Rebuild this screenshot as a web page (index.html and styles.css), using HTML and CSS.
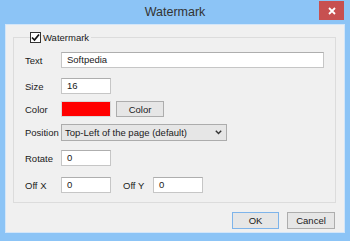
FILE: index.html
```html
<!DOCTYPE html>
<html>
<head>
<meta charset="utf-8">
<link rel="stylesheet" href="styles.css">
</head>
<body>
<div class="window">
  <div class="titlebar">
    <div class="title">Watermark</div>
    <div class="close">
      <svg width="8" height="8" viewBox="0 0 8 8"><path d="M1 1L7 7M7 1L1 7" stroke="#fff" stroke-width="1.8" fill="none"/></svg>
    </div>
  </div>
  <div class="client">
    <fieldset class="group">
      <legend class="legend">
        <span class="check"><svg width="9" height="9" viewBox="0 0 9 9"><path d="M1 4.5L3.5 7L8 1.5" stroke="#111" stroke-width="1.7" fill="none"/></svg></span>
        <span>Watermark</span>
      </legend>
      <div class="row r-text"><span class="label">Text</span><div class="input wide">Softpedia</div></div>
      <div class="row r-size"><span class="label">Size</span><div class="input small">16</div></div>
      <div class="row r-color"><span class="label">Color</span><div class="swatch"></div><div class="btn colorbtn">Color</div></div>
      <div class="row r-pos"><span class="label">Position</span><div class="select"><span>Top-Left of the page (default)</span><svg width="7" height="5" viewBox="0 0 7 5"><path d="M0.8 0.8L3.5 3.6L6.2 0.8" stroke="#333" stroke-width="1.4" fill="none"/></svg></div></div>
      <div class="row r-rot"><span class="label">Rotate</span><div class="input small">0</div></div>
      <div class="row r-off"><span class="label">Off X</span><div class="input small">0</div><span class="label2">Off Y</span><div class="input small">0</div></div>
    </fieldset>
    <div class="actions">
      <div class="btn ok">OK</div>
      <div class="btn cancel">Cancel</div>
    </div>
  </div>
</div>
</body>
</html>
```
FILE: styles.css
```css
* { box-sizing: border-box; }
html, body { margin: 0; padding: 0; }
body {
  width: 350px; height: 241px; overflow: hidden;
  background: #8cc4f6;
  font-family: "Liberation Sans", Arial, sans-serif;
  font-size: 9.5px;
  color: #1a1a1a;
}
.window { width: 350px; height: 241px; display: flex; flex-direction: column; }
.titlebar {
  height: 24px;
  display: grid;
  grid-template-columns: 1fr auto 1fr;
  align-items: start;
}
.title {
  grid-column: 2;
  font-size: 12.5px;
  line-height: 25px;
  color: #333;
}
.close {
  grid-column: 3;
  justify-self: end;
  margin: 1px 6px 0 0;
  width: 25px; height: 19px;
  background: #c75050;
  display: flex; align-items: center; justify-content: center;
}
.client {
  margin: 0 5px;
  height: 209px;
  background: #f0f0f0;
  border: 1px solid #d3e6f9;
  padding: 7px 8px 0 7px;
}
.group {
  margin: 0;
  height: 171px;
  border: 1px solid #dcdcdc;
  padding: 9px 0 0 11px;
}
.legend {
  margin-left: 5px;
  padding: 0 2px 0 0;
  display: flex; align-items: center; gap: 2px;
  height: 11px;
  line-height: 11px;
}
.check {
  width: 11px; height: 11px;
  border: 1px solid #333;
  background: #fff;
  display: flex; align-items: center; justify-content: center;
}
.row { display: flex; align-items: center; height: 16px; }
.r-size { margin-top: 10px; }
.r-color { margin-top: 7px; }
.r-pos { margin-top: 7px; height: 17px; }
.r-rot { margin-top: 9px; }
.r-off { margin-top: 11px; }
.label { width: 36px; }
.label2 { width: 30px; margin-left: 12px; }
.input {
  height: 16px;
  background: #fff;
  border: 1px solid #c6c6c6;
  border-top-color: #aeaeae;
  padding-left: 5px;
  line-height: 14px;
}
.wide { width: 263px; }
.small { width: 50px; }
.swatch { width: 50px; height: 16px; background: #ff0000; border: 1px solid #d8d8d8; }
.btn {
  height: 16px;
  background: #e6e6e6;
  border: 1px solid #adadad;
  display: flex; align-items: center; justify-content: center;
}
.colorbtn { width: 48px; margin-left: 5px; }
.select {
  width: 166px; height: 17px;
  background: #e6e6e6;
  border: 1px solid #acacac;
  display: flex; align-items: center; justify-content: space-between;
  padding: 0 4px 0 3px;
}
.actions {
  display: flex; justify-content: flex-end; gap: 8px;
  margin-top: 9px;
  padding-right: 1px;
}
.ok { width: 47px; height: 17px; border-color: #7eb4ea; }
.cancel { width: 48px; height: 17px; }
```
